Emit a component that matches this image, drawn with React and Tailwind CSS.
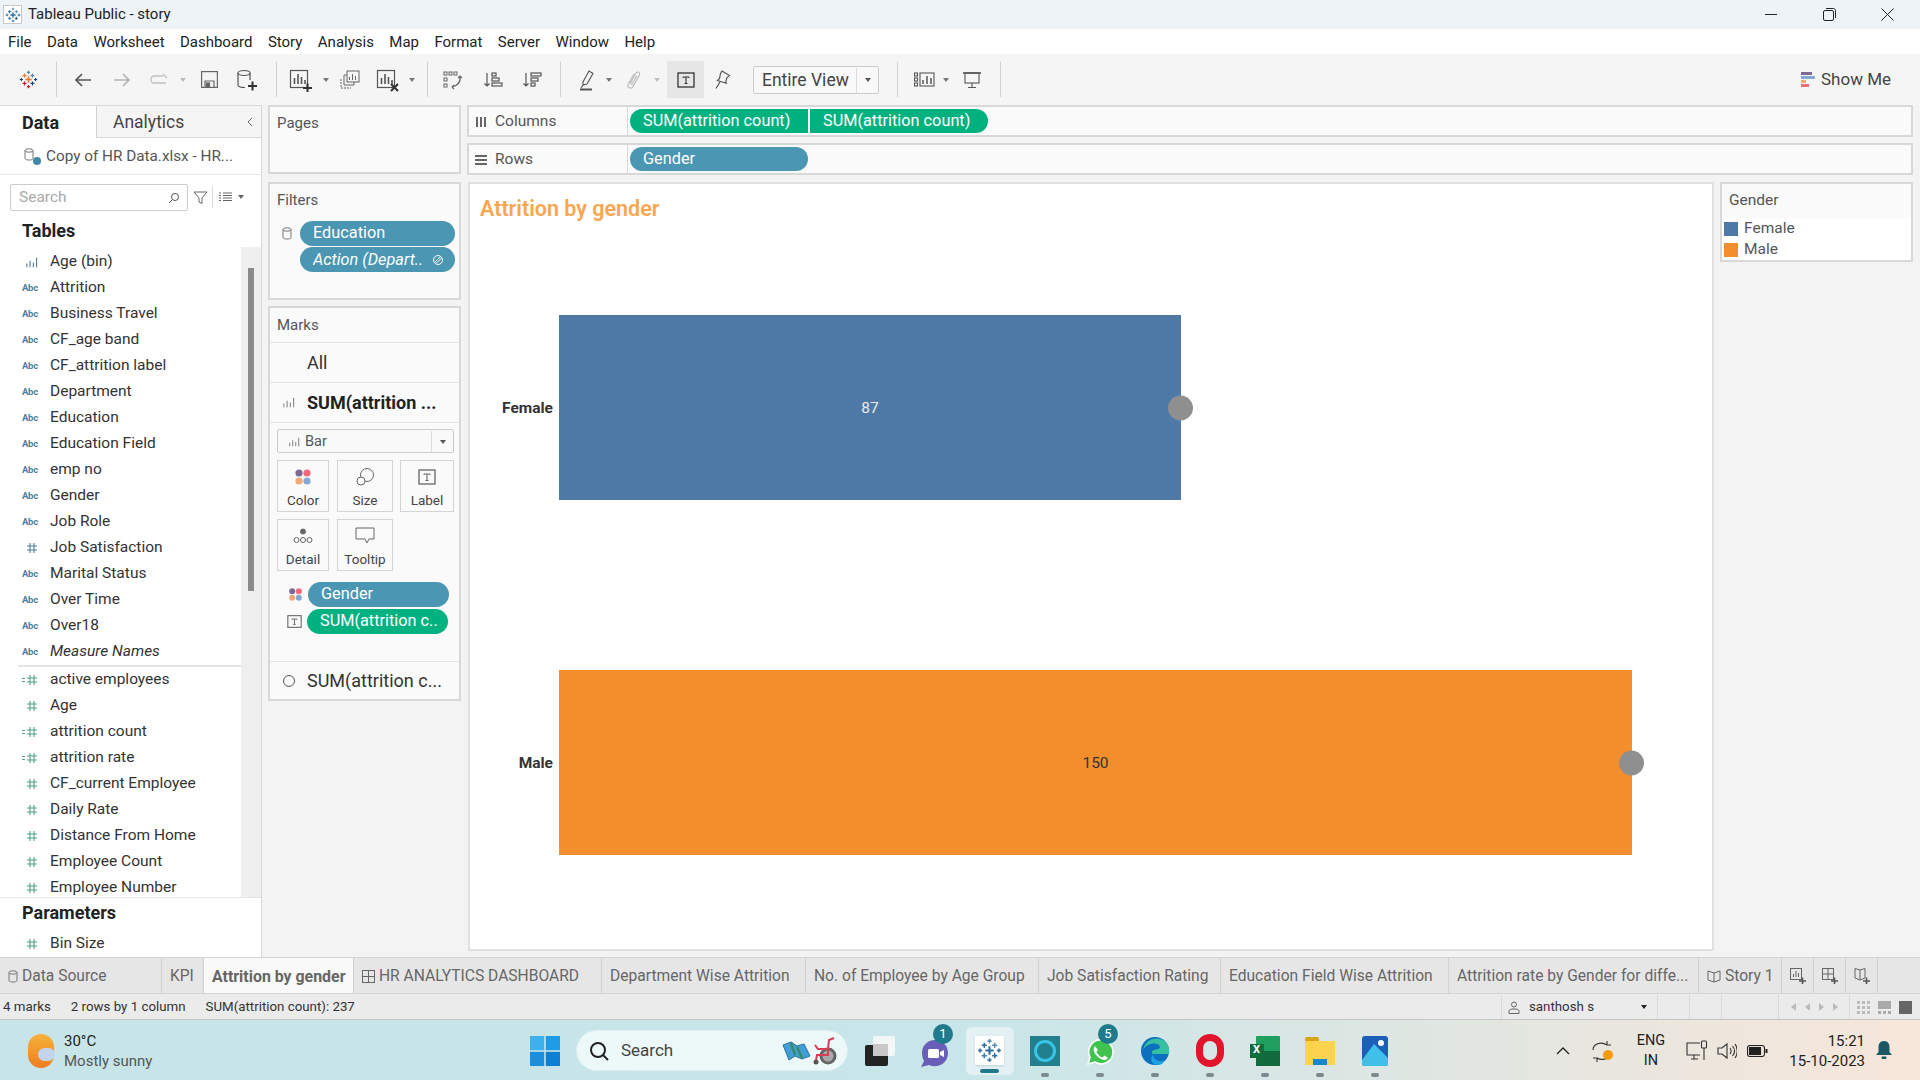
import React from 'react';

const Cross = ({ x, y, r, c, w = 1.5 }) => (
  <g stroke={c} strokeWidth={w}><path d={`M${x - r} ${y}H${x + r}M${x} ${y - r}V${y + r}`} /></g>
);

const Logo = ({ s = 20, mono }) => {
  const a = mono ? '#2e6fa0' : '#e8762d', b = mono ? '#3f80b0' : '#c72035', c = mono ? '#5b8fb5' : '#5b879b', d = mono ? '#2e6fa0' : '#1f447a';
  return (
    <svg width={s} height={s} viewBox="0 0 24 24" fill="none">
      <Cross x={12} y={12} r={4} c={a} w={2} />
      <Cross x={7} y={7} r={2.5} c={a} />
      <Cross x={17} y={7} r={2.5} c={c} />
      <Cross x={7} y={17} r={2.5} c={b} />
      <Cross x={17} y={17} r={2.5} c={d} />
      <Cross x={12} y={3} r={2} c={c} />
      <Cross x={12} y={21} r={2} c={b} />
      <Cross x={3} y={12} r={2} c={d} />
      <Cross x={21} y={12} r={2} c={d} />
    </svg>
  );
};

const Caret = ({ c = '#777' }) => <span className="block w-0 h-0 border-l-[3.5px] border-r-[3.5px] border-t-[4px] border-l-transparent border-r-transparent" style={{ borderTopColor: c }} />;
const Sep = () => <div className="w-px h-[35px] bg-[#d0d0d0]" />;
const Slot = ({ className, children }) => <div className={`flex items-center justify-center shrink-0 h-full ${className}`}>{children}</div>;

const Bars = ({ s = 14, c = '#888' }) => (
  <svg width={s} height={s} viewBox="0 0 14 14" fill="none" stroke={c} strokeWidth="1.2"><path d="M2 12V8M5.5 12V5M9 12V7M12.5 12V2" /></svg>
);
const BarChartBox = ({ badge }) => (
  <svg width="24" height="24" viewBox="0 0 24 24" fill="none" stroke="#555" strokeWidth="1.2">
    <rect x="1.5" y="2.5" width="17" height="17" /><path d="M5.5 16V10M9 16V6M12.5 16V9M16 16V12" strokeWidth="1.6" />
    {badge === '+' && <path d="M14 20H23M18.5 15.5V24" stroke="#333" strokeWidth="2" />}
    {badge === 'x' && <path d="M15 16L22 23M22 16L15 23" stroke="#333" strokeWidth="2" />}
  </svg>
);

const Pill = ({ c = 'blue', italic, className = '', children, icon }) => (
  <div className={`flex items-center rounded-full text-white text-[16.3px] pl-[13px] pr-[9px] pt-[1px] ${c === 'blue' ? 'bg-[#4b96b2]' : 'bg-[#02b180]'} ${italic ? 'italic' : ''} ${className}`}>
    <span className="flex-1 whitespace-nowrap overflow-hidden">{children}</span>{icon}
  </div>
);

const Abc = () => <span className="text-[9.5px] font-bold text-[#4f7f99] tracking-[-0.2px]">Abc</span>;
const Hash = ({ c = '#4f9f84', s = 12 }) => (
  <svg width={s} height={s} viewBox="0 0 12 12" fill="none" stroke={c} strokeWidth="1.1"><path d="M4 1V11M8 1V11M1 4H11M1 8H11" /></svg>
);
const CalcHash = () => (
  <span className="flex items-center gap-[1px]"><span className="w-[3px] h-[4px] border-y border-[#4f9f84]" /><Hash /></span>
);
const dims = ['Age (bin)', 'Attrition', 'Business Travel', 'CF_age band', 'CF_attrition label', 'Department', 'Education', 'Education Field', 'emp no', 'Gender', 'Job Role', 'Job Satisfaction', 'Marital Status', 'Over Time', 'Over18', 'Measure Names'];
const meas = [['active employees', 1], ['Age'], ['attrition count', 1], ['attrition rate', 1], ['CF_current Employee'], ['Daily Rate'], ['Distance From Home'], ['Employee Count'], ['Employee Number']];
const hashDims = ['Job Satisfaction'];

const Field = ({ icon, italic, children }) => (
  <div className="flex items-center h-[26px] text-[15.5px] text-[#333] shrink-0">
    <span className="w-[50px] pr-[12px] shrink-0 flex justify-end">{icon}</span>
    <span className={italic ? 'italic' : ''}>{children}</span>
  </div>
);

const Card = ({ className = '', children }) => <div className={`bg-[#fafafa] border-2 border-[#d8d8d8] ${className}`}>{children}</div>;

const MarkBtn = ({ w, icon, label, h }) => (
  <div className={`${w} ${h} shrink-0 flex flex-col items-center justify-between bg-[#fafafa] border border-[#d4d4d4] text-[13.5px] text-[#444] pt-[5px] pb-[1px]`}>
    <span className="h-[22px] flex items-center">{icon}</span><span>{label}</span>
  </div>
);
const Dots = ({ s = 18 }) => (
  <svg width={s} height={s} viewBox="0 0 18 18">
    <circle cx="5" cy="5" r="3.6" fill="#7b6a95" /><circle cx="13" cy="5" r="3.6" fill="#ef6a7a" /><circle cx="5" cy="13" r="3.6" fill="#f0a877" /><circle cx="13" cy="13" r="3.6" fill="#85a8d0" />
  </svg>
);
const TBox = ({ s = 18, c = '#666' }) => (
  <svg width={s} height={s} viewBox="0 0 18 18" fill="none" stroke={c} strokeWidth="1.3"><rect x="1" y="2" width="16" height="14" /><path d="M6 6H12M9 6V12.5M7.5 12.5H10.5M6 6V7M12 6V7" strokeWidth="1.1" /></svg>
);

const tabs = [
  ['w-[162px]', 'Data Source', 'ds'], ['w-[42px]', 'KPI'], ['w-[150px]', 'Attrition by gender', 'active'], ['w-[248px]', 'HR ANALYTICS DASHBOARD', 'grid'],
  ['w-[204px]', 'Department Wise Attrition'], ['w-[233px]', 'No. of Employee by Age Group'], ['w-[182px]', 'Job Satisfaction Rating'], ['w-[228px]', 'Education Field Wise Attrition'],
  ['w-[250px]', 'Attrition rate by Gender for diffe...'], ['w-[83px]', 'Story 1', 'story'],
];
const GridI = () => <svg width="13" height="13" viewBox="0 0 13 13" fill="none" stroke="#666"><rect x=".5" y=".5" width="12" height="12" /><path d="M6.5 0V13M0 6.5H13" /></svg>;
const BookI = () => <svg width="14" height="13" viewBox="0 0 14 13" fill="none" stroke="#666"><path d="M7 3L1 1V10L7 12L13 10V1L7 3ZM7 3V12" /></svg>;
const DbI = ({ c = '#777' }) => <svg width="10" height="13" viewBox="0 0 10 13" fill="none" stroke={c}><ellipse cx="5" cy="2.5" rx="4" ry="1.7" /><path d="M1 2.5V10.5C1 11.5 3 12 5 12S9 11.5 9 10.5V2.5" /></svg>;

const Dot = () => <span className="block w-[8px] h-[4px] rounded-full bg-[#7a8a8e]" />;
const TaskIcon = ({ children, dot }) => (
  <div className="w-[55px] h-full shrink-0 flex flex-col items-center justify-center relative">
    {children}
    {dot && <span className="absolute bottom-[3px]"><Dot /></span>}
  </div>
);
const Badge = ({ children }) => <span className="absolute top-[3px] right-[9px] w-[20px] h-[20px] rounded-full bg-[#1f7a8c] text-white text-[13px] flex items-center justify-center">{children}</span>;

export default function App() {
  return (
    <div className="w-[1920px] h-[1080px] overflow-hidden flex flex-col font-[Roboto,sans-serif] bg-[#f3f3f3] text-[#222]">
      {/* title bar */}
      <div className="h-[29px] shrink-0 bg-[#eef3f7] flex items-center pl-[3px] text-[15px] text-[#222]">
        <span className="w-[19px] h-[19px] bg-white border border-[#c8c8c8] flex items-center justify-center mr-[6px]"><Logo s={16} mono /></span>
        <span>Tableau Public - story</span>
        <div className="ml-auto mr-[4px] flex items-center h-full">
          <Slot className="w-[58px]"><span className="w-[12px] h-px bg-[#222]" /></Slot>
          <Slot className="w-[58px]"><svg width="13" height="13" viewBox="0 0 13 13" fill="none" stroke="#222"><rect x=".5" y="2.5" width="10" height="10" rx="1.5" /><path d="M3 .5H10.5C11.6.5 12.5 1.4 12.5 2.5V10" /></svg></Slot>
          <Slot className="w-[58px]"><svg width="13" height="13" viewBox="0 0 13 13" fill="none" stroke="#222"><path d="M.5.5L12.5 12.5M12.5.5L.5 12.5" /></svg></Slot>
        </div>
      </div>
      {/* menu */}
      <div className="h-[25px] shrink-0 bg-white flex items-center pl-[8px] pt-[1px] gap-[15.4px] text-[15px] text-[#222]">
        {['File', 'Data', 'Worksheet', 'Dashboard', 'Story', 'Analysis', 'Map', 'Format', 'Server', 'Window', 'Help'].map(m => <span key={m}>{m}</span>)}
      </div>
      {/* toolbar */}
      <div className="h-[51px] shrink-0 bg-[#f5f5f5] flex items-center text-[#555]">
        <Slot className="w-[56px]"><Logo s={19} /></Slot><Sep />
        <Slot className="w-[26px] ml-[13px]"><svg width="20" height="20" viewBox="0 0 20 20" fill="none" stroke="#555" strokeWidth="1.7"><path d="M18 10H3M9 4L3 10L9 16" /></svg></Slot>
        <Slot className="w-[26px] ml-[13px]"><svg width="20" height="20" viewBox="0 0 20 20" fill="none" stroke="#b5b5b5" strokeWidth="1.7"><path d="M2 10H17M11 4L17 10L11 16" /></svg></Slot>
        <Slot className="w-[24px] ml-[12px]"><svg width="20" height="14" viewBox="0 0 20 14" fill="none" stroke="#c0c0c0" strokeWidth="1.3"><path d="M14 3H5C1 3 1 10 5 10H17M14 1L18 5" /></svg></Slot>
        <Slot className="w-[10px] ml-[7px]"><Caret c="#bbb" /></Slot>
        <Slot className="w-[20px] ml-[11px]"><svg width="17" height="17" viewBox="0 0 17 17" fill="none" stroke="#666" strokeWidth="1.2"><rect x=".6" y=".6" width="15.8" height="15.8" /><path d="M4 16V10H13V16" /><rect x="5.5" y="12" width="3" height="4" fill="#666" /></svg></Slot>
        <Slot className="w-[22px] ml-[17px]"><svg width="22" height="22" viewBox="0 0 22 22" fill="none" stroke="#555" strokeWidth="1.2"><ellipse cx="8" cy="4" rx="6" ry="2.5" /><path d="M2 4V16C2 17.5 5 18.5 9 18.5M14 4V11" /><path d="M12 17H21M16.5 12.5V21.5" stroke="#333" strokeWidth="2" /></svg></Slot>
        <span className="ml-[18px]"><Sep /></span>
        <Slot className="w-[26px] ml-[11px]"><BarChartBox badge="+" /></Slot>
        <Slot className="w-[10px] ml-[7px]"><Caret /></Slot>
        <Slot className="w-[24px] ml-[7px]"><svg width="20" height="20" viewBox="0 0 20 20" fill="none" stroke="#666" strokeWidth="1"><rect x="7" y="1" width="12" height="11" /><path d="M9.5 10V7M12.5 10V4M15.5 10V6" /><path d="M7 5H4V15H14V12" /><path d="M1 9V18H11" strokeDasharray="2 1" /></svg></Slot>
        <Slot className="w-[26px] ml-[13px]"><BarChartBox badge="x" /></Slot>
        <Slot className="w-[10px] ml-[6px]"><Caret /></Slot>
        <span className="ml-[10px]"><Sep /></span>
        <Slot className="w-[24px] ml-[13px]"><svg width="20" height="20" viewBox="0 0 20 20" fill="none" stroke="#666" strokeWidth="1"><rect x="1" y="2" width="3" height="3" /><rect x="6" y="2" width="3" height="3" /><rect x="11" y="2" width="3" height="3" /><rect x="1" y="8" width="3" height="3" /><rect x="1" y="14" width="3" height="3" /><path d="M17 7C18 12 14 16 9 17M9 17L11 15M9 17L11 19M15 8L17 6L19 8" strokeWidth="1.2" /></svg></Slot>
        <Slot className="w-[20px] ml-[18px]"><svg width="20" height="20" viewBox="0 0 20 20" fill="none" stroke="#555" strokeWidth="1.2"><path d="M4 3V16M1.5 13.5L4 16L6.5 13.5" /><rect x="9" y="3" width="4" height="3" /><rect x="9" y="8" width="7" height="3" /><rect x="9" y="13" width="10" height="3" /></svg></Slot>
        <Slot className="w-[20px] ml-[19px]"><svg width="20" height="20" viewBox="0 0 20 20" fill="none" stroke="#555" strokeWidth="1.2"><path d="M4 3V16M1.5 13.5L4 16L6.5 13.5" /><rect x="9" y="3" width="10" height="3" /><rect x="9" y="8" width="7" height="3" /><rect x="9" y="13" width="4" height="3" /></svg></Slot>
        <span className="ml-[18px]"><Sep /></span>
        <Slot className="w-[20px] ml-[16px]"><svg width="18" height="22" viewBox="0 0 18 22" fill="none" stroke="#555" strokeWidth="1.1"><path d="M5 13L11 2L15 4.500L9 15L5 16Z" /><path d="M3 19L5 16" /><path d="M2 20.500H14" strokeWidth="2" /></svg></Slot>
        <Slot className="w-[10px] ml-[7px]"><Caret /></Slot>
        <Slot className="w-[18px] ml-[10px]"><svg width="16" height="20" viewBox="0 0 16 20" fill="none" stroke="#bdbdbd" strokeWidth="1.2"><path d="M5 14L11 3C12.500 1 15.500 2.500 14.500 5L8 16.500C6.500 19.500 2 18 3 14.500L9 4" /><path d="M6.500 15L12 5.500" /></svg></Slot>
        <Slot className="w-[10px] ml-[10px]"><Caret c="#c0c0c0" /></Slot>
        <Slot className="w-[37px] !h-[37px] ml-[5px] bg-[#e6e6e6]"><TBox s={18} c="#333" /></Slot>
        <Slot className="w-[20px] ml-[8px]"><svg width="18" height="20" viewBox="0 0 18 20" fill="none" stroke="#555" strokeWidth="1.200"><path d="M9 1L16.500 5.500L14 7.500L12.500 12.500L14 13.500L4.500 10.500L6.500 8.500L7.500 3.500ZM7 12L3 18.500" /></svg></Slot>
        <div className="ml-[21px] w-[126px] h-[28px] pt-[1px] bg-[#f9f9f9] border border-[#ccc] rounded-[2px] flex items-center text-[17.5px] text-[#444]">
          <span className="flex-1 pl-[8px]">Entire View</span><span className="w-[22px] h-full border-l border-[#ddd] flex items-center justify-center"><Caret c="#555" /></span>
        </div>
        <span className="ml-[18px]"><Sep /></span>
        <Slot className="w-[22px] ml-[15px]"><svg width="21" height="16" viewBox="0 0 21 16" fill="none" stroke="#555" strokeWidth="1.1"><rect x=".5" y="1" width="3" height="3" /><rect x=".5" y="6" width="3" height="3" /><rect x=".5" y="11" width="3" height="3" /><rect x="6" y="1" width="14" height="13" /><path d="M9 12V8M13 12V4M17 12V6" strokeWidth="1.5" /></svg></Slot>
        <Slot className="w-[10px] ml-[6px]"><Caret /></Slot>
        <Slot className="w-[20px] ml-[11px]"><svg width="18" height="18" viewBox="0 0 18 18" fill="none" stroke="#555" strokeWidth="1.1"><path d="M0 2H18" strokeWidth="1.6" /><rect x="2" y="2" width="14" height="10" /><path d="M9 12V16M5 16.500H13" /></svg></Slot>
        <span className="ml-[18px]"><Sep /></span>
        <div className="ml-auto mr-[29px] flex items-center gap-[6px] text-[17px] text-[#444]">
          <svg width="14" height="15" viewBox="0 0 14 15"><rect y="0" width="11" height="3" fill="#7b6a95" /><rect y="4" width="14" height="3" fill="#85a8d0" /><rect y="8" width="5" height="3" fill="#f0a877" /><rect y="12" width="8" height="3" fill="#ef6a7a" /></svg>
          <span>Show Me</span>
        </div>
      </div>
      {/* main */}
      <div className="flex-1 min-h-0 flex">
        {/* data pane */}
        <div className="w-[262px] shrink-0 flex flex-col bg-white border-r border-[#d8d8d8] border-t border-t-[#d8d8d8]">
          <div className="h-[32px] shrink-0 flex text-[17.5px] relative">
            <div className="w-[97px] pl-[22px] text-[18px] font-bold border-r border-[#d0d0d0] flex items-center text-[#222]">Data</div>
            <div className="flex-1 bg-[#f5f5f5] border-b border-[#d8d8d8] pl-[16px] pt-[1px] flex items-center text-[#444]">Analytics
              <svg className="ml-auto mr-[7px]" width="8" height="12" viewBox="0 0 8 12" fill="none" stroke="#666"><path d="M6 2L2 6L6 10" /></svg>
            </div>
          </div>
          <div className="h-[37px] shrink-0 flex items-center pl-[24px] gap-[6px] border-b border-[#e4e4e4] text-[15.3px] text-[#555]">
            <span className="relative w-[16px] h-[16px]">
              <DbI /><span className="absolute right-[-1px] bottom-[-1px] w-[8px] h-[8px] rounded-full bg-[#3f87a8]" />
            </span>
            <span className="whitespace-nowrap">Copy of HR Data.xlsx - HR...</span>
          </div>
          <div className="h-[44px] shrink-0 flex items-center pl-[10px]">
            <div className="w-[178px] h-[27px] pt-[1px] border border-[#ccc] rounded-[2px] flex items-center pl-[8px] pr-[7px] text-[15.5px] text-[#aaa] bg-white">
              <span className="flex-1">Search</span>
              <svg width="12" height="12" viewBox="0 0 12 12" fill="none" stroke="#555" strokeWidth="1"><circle cx="7" cy="5" r="3.5" /><path d="M4.500 7.500L1 11" /></svg>
            </div>
            <svg className="ml-[5px]" width="15" height="15" viewBox="0 0 15 15" fill="none" stroke="#666"><path d="M1 2H14L9 8V13.500L6 12V8Z" /></svg>
            <span className="w-px h-[22px] bg-[#d8d8d8] ml-[4px]" />
            <svg className="ml-[6px]" width="13" height="10" viewBox="0 0 13 10" fill="none" stroke="#666"><path d="M0 1H2M4 1H13M0 3.500H2M4 3.500H13M0 6H2M4 6H13M0 8.500H2M4 8.500H13" /></svg>
            <span className="ml-[6px]"><Caret c="#666" /></span>
          </div>
          <div className="h-[28px] pb-[5px] shrink-0 flex items-center pl-[22px] text-[18px] font-bold text-[#222]">Tables</div>
          <div className="h-[651px] shrink-0 flex border-b border-[#e4e4e4]">
            <div className="w-[241px] shrink-0 overflow-hidden pt-[2px]">
              {dims.map((d, i) => (
                <Field key={d} italic={d === 'Measure Names'} icon={i === 0 ? <Bars s={13} c="#4f7f99" /> : hashDims.includes(d) ? <Hash c="#4f7f99" /> : <Abc />}>{d}</Field>
              ))}
              <div className="h-[2px] ml-[18px] bg-[#e4e4e4]" />
              {meas.map(([d, calc]) => <Field key={d} icon={calc ? <CalcHash /> : <Hash />}>{d}</Field>)}
            </div>
            <div className="flex-1 bg-[#efefef] flex justify-center pt-[21px]">
              <div className="w-[6px] h-[323px] bg-[#8a8a8a]" />
            </div>
          </div>
          <div className="h-[33px] pb-[4px] shrink-0 flex items-center pl-[22px] text-[18px] font-bold text-[#222]">Parameters</div>
          <Field icon={<Hash />}>Bin Size</Field>
        </div>
        {/* cards */}
        <div className="w-[193px] ml-[6px] shrink-0 flex flex-col">
          <Card className="h-[69px] px-[7px] pt-[5px] text-[15px] text-[#555]">Pages</Card>
          <Card className="h-[118px] mt-[8px] text-[15px] text-[#555]">
            <div className="pl-[7px] pt-[5px] h-[36px]">Filters</div>
            <div className="flex items-center pl-[12px] gap-[8px] h-[26px]">
              <DbI /><Pill className="w-[155px] h-[25px]">Education</Pill>
            </div>
            <div className="pl-[30px] pt-[1px]">
              <Pill italic className="w-[155px] h-[25px] !pr-[11px]" icon={<svg width="12" height="12" viewBox="0 0 12 12" fill="none" stroke="white"><circle cx="6" cy="6" r="4.500" /><path d="M3 8L8 3M4 9.500L9.500 4" /></svg>}>Action (Depart..</Pill>
            </div>
          </Card>
          <Card className="h-[395px] mt-[6px] text-[15px] text-[#555]">
            <div className="h-[35px] px-[7px] flex items-center border-b border-[#e4e4e4]">Marks</div>
            <div className="h-[40px] pl-[37px] flex items-center border-b border-[#e4e4e4] text-[18px] text-[#333]">All</div>
            <div className="h-[40px] flex items-center border-b border-[#e4e4e4] text-[18px] font-bold text-[#222]">
              <span className="w-[37px] flex justify-center"><Bars s={13} /></span>SUM(attrition ...
            </div>
            <div className="h-[239px] border-b border-[#e4e4e4] pl-[7px] pt-[6px] bg-[#fafafa]">
              <div className="w-[177px] h-[24px] pt-[1px] border border-[#ccc] rounded-[2px] flex items-center text-[14.5px] bg-[#f9f9f9]">
                <span className="w-[26px] flex justify-end pr-[4px]"><Bars s={12} /></span>
                <span className="flex-1 pl-[1px]">Bar</span>
                <span className="w-[22px] h-full border-l border-[#ddd] flex items-center justify-center"><Caret c="#555" /></span>
              </div>
              <div className="flex mt-[7px]">
                <MarkBtn w="w-[52px]" h="h-[52px]" label="Color" icon={<Dots />} />
                <span className="w-[8px] shrink-0" />
                <MarkBtn w="w-[56px]" h="h-[52px]" label="Size" icon={<svg width="20" height="20" viewBox="0 0 20 20" fill="none" stroke="#666"><circle cx="12" cy="8" r="6.500" /><circle cx="6" cy="14" r="4" fill="#fafafa" /></svg>} />
                <span className="w-[7px] shrink-0" />
                <MarkBtn w="w-[54px]" h="h-[52px]" label="Label" icon={<TBox />} />
              </div>
              <div className="flex mt-[7px]">
                <MarkBtn w="w-[52px]" h="h-[52px]" label="Detail" icon={<svg width="20" height="16" viewBox="0 0 20 16" fill="none" stroke="#666"><circle cx="10" cy="3.500" r="2.500" fill="#666" /><circle cx="3.500" cy="12" r="2.500" /><circle cx="10" cy="12" r="2.500" /><circle cx="16.500" cy="12" r="2.500" /></svg>} />
                <span className="w-[8px] shrink-0" />
                <MarkBtn w="w-[56px]" h="h-[52px]" label="Tooltip" icon={<svg width="20" height="18" viewBox="0 0 20 18" fill="none" stroke="#666"><path d="M1 1H19V12H14L12 16L10 12H1Z" /></svg>} />
              </div>
              <div className="flex items-center h-[26px] mt-[10px] pl-[11px] gap-[5px]"><Dots s={15} /><Pill className="w-[141px] h-[25px]">Gender</Pill></div>
              <div className="flex items-center h-[26px] mt-[1px] pl-[10px] gap-[5px]"><TBox s={15} /><Pill c="green" className="w-[141px] h-[25px]">SUM(attrition c..</Pill></div>
            </div>
            <div className="flex-1 h-[37px] flex items-center text-[18px] text-[#333]">
              <span className="w-[37px] flex justify-center"><span className="w-[12px] h-[12px] border border-[#555] rounded-full" /></span>SUM(attrition c...
            </div>
          </Card>
        </div>
        {/* right */}
        <div className="flex-1 min-w-0 ml-[6px] mr-[7px] flex flex-col">
          <Card className="h-[32px] flex items-center text-[15.5px] text-[#555]">
            <div className="w-[159px] h-full flex items-center border-r border-[#d8d8d8] pl-[6px] pt-[1px] gap-[8px]">
              <svg width="12" height="10" viewBox="0 0 12 10" fill="#666"><rect x="1" width="2" height="10" /><rect x="5" width="2" height="10" /><rect x="9" width="2" height="10" /></svg>
              Columns
            </div>
            <Pill c="green" className="w-[178px] h-[24px] ml-[2px] !rounded-r-none">SUM(attrition count)</Pill>
            <Pill c="green" className="w-[178px] h-[24px] ml-[2px] !rounded-l-none">SUM(attrition count)</Pill>
          </Card>
          <Card className="h-[32px] mt-[6px] flex items-center text-[15.5px] text-[#555]">
            <div className="w-[159px] h-full flex items-center border-r border-[#d8d8d8] pl-[6px] pt-[1px] gap-[8px]">
              <svg width="12" height="10" viewBox="0 0 12 10" fill="#666"><rect y="0" width="12" height="2" /><rect y="4" width="12" height="2" /><rect y="8" width="12" height="2" /></svg>
              Rows
            </div>
            <Pill className="w-[178px] h-[24px] ml-[2px]">Gender</Pill>
          </Card>
          <div className="flex mt-[7px] gap-[6px] items-start flex-1 min-h-0">
            <div className="w-[1246px] h-[769px] ml-[1px] shrink-0 bg-white border-2 border-[#e0e0e0] flex flex-col pl-[10px]">
              <div className="h-[131px] pt-[9px] text-[21.5px] font-semibold text-[#f8a651]">Attrition by gender</div>
              <div className="flex items-center h-[185px]">
                <span className="w-[79px] pr-[6px] pt-[2px] text-right text-[15.5px] font-bold text-[#333]">Female</span>
                <div className="relative w-[622px] h-full bg-[#4e79a7] flex items-center justify-center pt-[2px] text-[15.5px] text-[#eaeaea]">87
                  <span className="absolute right-[-12px] top-1/2 -translate-y-1/2 w-[25px] h-[25px] rounded-full bg-[#8f8f8f]" />
                </div>
              </div>
              <div className="h-[170px]" />
              <div className="flex items-center h-[185px]">
                <span className="w-[79px] pr-[6px] pt-[2px] text-right text-[15.5px] font-bold text-[#333]">Male</span>
                <div className="relative w-[1073px] h-full bg-[#f28e2b] flex items-center justify-center pt-[2px] text-[15.5px] text-[#333]">150
                  <span className="absolute right-[-12px] top-1/2 -translate-y-1/2 w-[25px] h-[25px] rounded-full bg-[#8f8f8f]" />
                </div>
              </div>
            </div>
            <div className="flex-1 h-[80px] bg-white border-2 border-[#d8d8d8] text-[15.5px] text-[#555]">
              <div className="h-[34px] bg-[#fafafa] pl-[7px] flex items-center">Gender</div>
              <div className="h-[21px] flex items-center pl-[2px] gap-[6px]"><span className="w-[14px] h-[14px] bg-[#4e79a7]" />Female</div>
              <div className="h-[21px] flex items-center pl-[2px] gap-[6px]"><span className="w-[14px] h-[14px] bg-[#f28e2b]" />Male</div>
            </div>
          </div>
        </div>
      </div>
      {/* tabs */}
      <div className="h-[37px] shrink-0 flex bg-[#e6e6e6] border-y border-[#d4d4d4] text-[15.6px] text-[#666]">
        {tabs.map(([w, t, k]) => (
          <div key={t} className={`${w} shrink-0 flex items-center justify-start pl-[8px] pt-[2px] gap-[4px] whitespace-nowrap border-r border-[#d0d0d0] ${k === 'active' ? 'bg-[#f9f9f9] font-bold text-[15.9px]' : ''}`}>
            {k === 'ds' && <DbI />}{k === 'grid' && <GridI />}{k === 'story' && <BookI />}{t}
          </div>
        ))}
        {['s', 'g', 'b'].map(k => (
          <div key={k} className="w-[32px] shrink-0 flex items-center justify-center border-r border-[#d0d0d0]">
            <svg width="16" height="16" viewBox="0 0 16 16" fill="none" stroke="#666">
              {k === 's' && <><rect x=".5" y=".5" width="11" height="11" /><path d="M3.500 9V6M6 9V3M8.500 9V5" /></>}
              {k === 'g' && <><rect x=".5" y=".5" width="11" height="11" /><path d="M6 0V12M0 6H12" /></>}
              {k === 'b' && <path d="M6 2L1 .5V10L6 12L11 10V.5ZM6 2V12" />}
              <path d="M9 13H16M12.500 9.500V16" strokeWidth="1.600" stroke="#555" />
            </svg>
          </div>
        ))}
      </div>
      {/* status */}
      <div className="h-[26px] shrink-0 flex items-center pt-[1px] bg-[#ebebeb] border-b border-[#c4c4c4] text-[13.3px] text-[#333]">
        <span className="ml-[3px]">4 marks</span>
        <span className="ml-[20px]">2 rows by 1 column</span>
        <span className="ml-[20px]">SUM(attrition count): 237</span>
        <div className="ml-auto flex h-full">
          <div className="w-[157px] border-x border-[#d8d8d8] flex items-center pl-[6px] gap-[9px]">
            <svg width="12" height="13" viewBox="0 0 12 13" fill="none" stroke="#666"><circle cx="6" cy="3.500" r="2.500" /><path d="M1 12.500V10C1 8.500 3 8 6 8S11 8.500 11 10V12.500Z" /></svg>
            <span className="flex-1">santhosh s</span><span className="mr-[10px]"><Caret c="#222" /></span>
          </div>
          <div className="w-[32px] border-r border-[#d8d8d8]" /><div className="w-[32px] border-r border-[#d8d8d8]" />
          <div className="w-[57px] border-r border-[#d8d8d8]" />
          <div className="w-[71px] border-r border-[#d8d8d8] flex items-center justify-center gap-[9px]">
            {[0, 1, 2, 3].map(i => <span key={i} className="block w-0 h-0 border-y-[4px] border-y-transparent" style={i < 2 ? { borderRight: '5px solid #bbb' } : { borderLeft: '5px solid #bbb' }} />)}
          </div>
          <div className="w-[70px] flex items-center justify-center gap-[8px] pr-[2px]">
            <svg width="13" height="13" viewBox="0 0 13 13" fill="#bbb"><rect width="3" height="3" /><rect x="5" width="3" height="3" /><rect x="10" width="3" height="3" /><rect y="5" width="3" height="3" /><rect x="5" y="5" width="3" height="3" /><rect x="10" y="5" width="3" height="3" /><rect y="10" width="3" height="3" /><rect x="5" y="10" width="3" height="3" /><rect x="10" y="10" width="3" height="3" /></svg>
            <svg width="13" height="13" viewBox="0 0 13 13" fill="#aaa"><rect width="13" height="8" /><rect y="10" width="3" height="3" /><rect x="5" y="10" width="3" height="3" /><rect x="10" y="10" width="3" height="3" /></svg>
            <span className="w-[13px] h-[13px] bg-[#666]" />
          </div>
        </div>
      </div>
      {/* taskbar */}
      <div className="h-[60px] shrink-0 flex items-center pt-[1px] bg-gradient-to-r from-[#c7e4e8] via-[#c8e6e9] to-[#f7e6da] text-[#222]">
        <div className="ml-[28px] w-[28px] h-[34px] relative">
          <span className="absolute left-0 top-0 w-[26px] h-[34px] rounded-full bg-gradient-to-b from-[#f6b13a] to-[#ee7d1e]" />
          <span className="absolute left-[10px] top-[14px] w-[17px] h-[13px] rounded-full bg-[#c2d4ee]" />
        </div>
        <div className="ml-[8px] w-[120px] text-[15px] leading-[20px]"><div className="text-[#222]">30°C</div><div className="text-[#555]">Mostly sunny</div></div>
        <svg className="ml-[346px] shrink-0" width="30" height="30" viewBox="0 0 30 30">
          <rect width="14.200" height="14.200" fill="#3bb1ee" /><rect x="15.800" width="14.200" height="14.200" fill="#1e9be6" /><rect y="15.800" width="14.200" height="14.200" fill="#1a8fdf" /><rect x="15.800" y="15.800" width="14.200" height="14.200" fill="#0f7fd4" />
        </svg>
        <div className="w-[272px] h-[41px] ml-[16px] rounded-full bg-[#edf8f9] border border-[#ddeef0] flex items-center pl-[12px] gap-[12px] text-[17px] text-[#444] shrink-0">
          <svg width="20" height="20" viewBox="0 0 20 20" fill="none" stroke="#222" strokeWidth="2"><circle cx="9" cy="9" r="7" /><path d="M14 14L19 19" /></svg>
          <span className="flex-1">Search</span>
          <svg className="mr-[9px]" width="56" height="30" viewBox="0 0 56 30" fill="none">
            <path d="M1 9L9 6L15 10L22 8L28 20L20 23L13 20L7 24Z" fill="#3f9fd6" stroke="#2a6f9e" /><path d="M9 7L13 19M15 11L20 22" stroke="#3a8a6a" strokeWidth="2.500" />
            <circle cx="46" cy="20" r="7" stroke="#666" strokeWidth="3" fill="#a9a9a9" /><circle cx="34" cy="26" r="2.500" fill="#555" /><path d="M52 2L47 4L46 13H36L33 9M46 13V19H35L34 24" stroke="#d93a55" strokeWidth="2" />
          </svg>
        </div>
        <div className="h-full flex ml-[4px]">
          <TaskIcon><span className="relative w-[30px] h-[30px]"><span className="absolute right-0 top-0 w-[22px] h-[20px] bg-[#f3f6f6] rounded-[2px]" /><span className="absolute left-0 bottom-0 w-[23px] h-[21px] bg-[#222] rounded-[2px]" /><span className="absolute right-[7px] top-[8px] w-[15px] h-[12px] bg-[#c8c8c8]" /></span></TaskIcon>
          <TaskIcon>
            <svg className="mt-[4px]" width="30" height="30" viewBox="0 0 30 30"><path d="M15 2C7 2 2 8 2 15C2 19 3 21 4 23L1 29L9 27C18 31 28 25 28 15C28 8 23 2 15 2Z" fill="#6a5fb8" /><rect x="8" y="11" width="11" height="9" rx="1.500" fill="white" /><path d="M20 14L24 12V19L20 17Z" fill="white" /></svg>
            <Badge>1</Badge>
          </TaskIcon>
          <TaskIcon>
            <span className="absolute left-[3.5px] top-[6px] w-[48px] h-[48px] rounded-[6px] bg-[#e3f1f5]" />
            <span className="relative w-[29px] h-[29px] bg-white flex items-center justify-center shadow-sm"><Logo s={25} mono /></span>
            <span className="absolute bottom-[7px] w-[19px] h-[4px] rounded-full bg-[#1f7a8c]" />
          </TaskIcon>
          <TaskIcon dot><span className="w-[30px] h-[30px] bg-[#22808e] flex items-center justify-center"><span className="w-[22px] h-[22px] rounded-full border-[3px] border-[#39c5e8]" /></span></TaskIcon>
          <TaskIcon dot>
            <svg className="mt-[3px]" width="30" height="30" viewBox="0 0 30 30"><path d="M3 27L5 20C1 12 7 3 15 3C23 3 28 9 28 15C28 24 18 30 10 25Z" fill="#3fc44f" stroke="white" strokeWidth="1.500" /><path d="M10 9L13 13L11.500 15C13 18 15 19.500 17.500 20.500L19.500 18.500L23 21C21 24 17 24 12 19C8 15 8 11 10 9Z" fill="white" /></svg>
            <Badge>5</Badge>
          </TaskIcon>
          <TaskIcon dot>
            <svg width="30" height="30" viewBox="0 0 30 30"><circle cx="15" cy="15" r="14" fill="#0d6fc0" /><path d="M3 14C5 4 15 0 23 4C28 7 30 12 29 18H14C11 18 11 15 14 14C17 13 22 13 19 9C14 6 6 8 3 14Z" fill="#35c0a0" /><path d="M13 18C13 24 19 27 25 24L22 28C15 31 8 26 13 18Z" fill="#1fa2e0" /></svg>
          </TaskIcon>
          <TaskIcon dot><span className="w-[28px] h-[33px] rounded-full border-[7px] border-[#e1162c]" /></TaskIcon>
          <TaskIcon dot>
            <span className="relative w-[30px] h-[30px] flex"><span className="absolute right-0 top-0 w-[24px] h-[30px] bg-[#1f9f60] rounded-[1px]" /><span className="absolute right-0 top-[15px] w-[24px] h-[15px] bg-[#116b3c]" /><span className="absolute left-0 top-[8px] w-[14px] h-[14px] bg-[#0f6e3c] text-white text-[11px] font-bold flex items-center justify-center">X</span></span>
          </TaskIcon>
          <TaskIcon dot>
            <span className="relative w-[30px] h-[28px]"><span className="absolute left-0 top-0 w-[14px] h-[8px] bg-[#dba51a] rounded-t-[2px]" /><span className="absolute left-0 top-[4px] w-[30px] h-[24px] bg-[#fcd34d]" /><span className="absolute left-[8px] bottom-0 w-[14px] h-[6px] bg-[#1a86d0]" /></span>
          </TaskIcon>
          <TaskIcon dot>
            <svg width="26" height="30" viewBox="0 0 26 30"><rect width="26" height="30" rx="3" fill="#1a5fb8" /><path d="M0 24L12 8L26 22V27C26 29 25 30 23 30H3C1 30 0 29 0 27Z" fill="#3ec0e8" /><circle cx="19" cy="7" r="3" fill="white" /></svg>
          </TaskIcon>
        </div>
        <svg className="ml-[154px]" width="14" height="9" viewBox="0 0 14 9" fill="none" stroke="#222" strokeWidth="1.300"><path d="M1 8L7 2L13 8" /></svg>
        <span className="relative ml-[21px] w-[22px] h-[22px] shrink-0">
          <svg width="22" height="22" viewBox="0 0 22 22" fill="none" stroke="#333" strokeWidth="1.100"><path d="M2 10C2 4 10 1 16 5M16 1V5H20M20 13C18 19 11 21 6 18M6 22V18H2" /></svg>
          <span className="absolute right-0 bottom-[2px] w-[10px] h-[10px] rounded-full bg-[#f59a0b]" />
        </span>
        <div className="ml-[18px] w-[40px] text-center text-[14.5px] leading-[20px] text-[#222]">ENG<br />IN</div>
        <svg className="ml-[15px]" width="22" height="22" viewBox="0 0 22 22" fill="none" stroke="#333" strokeWidth="1.100"><path d="M14 3H1V15H14M5 19H12M8 15V19M18 8V20" /><rect x="15.500" y="1" width="5" height="7" rx="1" /></svg>
        <svg className="ml-[9px]" width="20" height="18" viewBox="0 0 20 18" fill="none" stroke="#333" strokeWidth="1.100"><path d="M1 6H5L10 2V16L5 12H1ZM13 6C14.500 8 14.500 10 13 12M15.500 4C18 7 18 11 15.500 14M18 2C21 6 21 12 18 16" /></svg>
        <svg className="ml-[10px]" width="21" height="12" viewBox="0 0 21 12" fill="none" stroke="#222" strokeWidth="1.100"><rect x=".5" y=".5" width="17" height="11" rx="2.500" /><rect x="2.500" y="2.500" width="11" height="7" fill="#222" /><path d="M19.500 4V8" strokeWidth="2" /></svg>
        <div className="ml-[12px] text-right text-[15px] leading-[20px] text-[#222] w-[85px]"><div>15:21</div><div className="whitespace-nowrap">15-10-2023</div></div>
        <svg className="ml-[11px]" width="16" height="19" viewBox="0 0 16 19" fill="#1c5864"><path d="M8 0C4 0 2.500 3 2.500 6V11L0 14H16L13.500 11V6C13.500 3 12 0 8 0Z" /><rect x="5.500" y="15.500" width="5" height="2.500" rx="1" /></svg>
      </div>
    </div>
  );
}
